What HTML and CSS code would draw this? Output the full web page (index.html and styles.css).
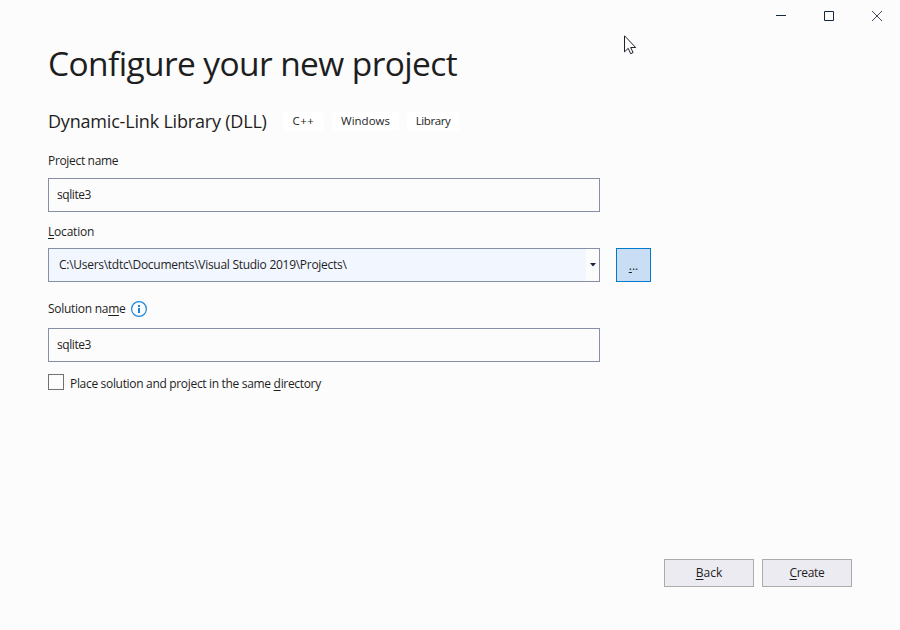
FILE: index.html
```html
<!DOCTYPE html>
<html lang="en">
<head>
<meta charset="utf-8">
<title>Configure your new project</title>
<link rel="stylesheet" href="styles.css">
</head>
<body>
<div class="window">
  <header class="titlebar">
    <svg class="caption" viewBox="0 0 48 32"><path d="M19 15.5h10"/></svg>
    <svg class="caption" viewBox="0 0 48 32"><path d="M19.5 11.5h9v9h-9z"/></svg>
    <svg class="caption close" viewBox="0 0 48 32"><path d="M19 11l10 10M29 11l-10 10"/></svg>
  </header>
  <main class="content">
    <h1 class="title"><span>Configure your new project</span></h1>
    <div class="template">
      <h2 class="template-name"><span>Dynamic-Link Library (DLL)</span></h2>
      <ul class="tags"><li class="tag tag-cpp">C++</li><li class="tag tag-win">Windows</li><li class="tag tag-lib">Library</li></ul>
    </div>
    <div class="field project">
      <div class="label"><span class="t-project">Project name</span></div>
      <div class="input"><span class="t-sql">sqlite3</span></div>
    </div>
    <div class="field location">
      <div class="label"><span class="t-location"><u>L</u>ocation</span></div>
      <div class="row">
        <div class="combo">
          <div class="combo-text"><span class="t-path">C:\Users\tdtc\Documents\Visual Studio 2019\Projects\</span></div>
          <div class="combo-arrow"><svg width="6" height="4" viewBox="0 0 6 4"><path d="M0 0h6L3 3.4z"/></svg></div>
        </div>
        <button class="browse"><u>.</u>..</button>
      </div>
    </div>
    <div class="field solution">
      <div class="label"><span class="t-solution">Solution na<u>m</u>e</span>
        <svg class="info" width="16" height="16" viewBox="0 0 16 16"><circle cx="8" cy="8" r="7.4"/><path d="M7 4h2v2H7zM7 7h2v5H7z"/></svg>
      </div>
      <div class="input"><span class="t-sql">sqlite3</span></div>
    </div>
    <div class="check"><span class="box"></span><span class="t-check">Place solution and project in the same <u>d</u>irectory</span></div>
  </main>
  <footer class="actions">
    <button class="btn"><span class="t-back"><u>B</u>ack</span></button>
    <button class="btn"><span class="t-create"><u>C</u>reate</span></button>
  </footer>
  <svg class="cursor" width="13" height="20" viewBox="0 0 13 20"><path d="M.5.8v16.1l3.7-3.6 2.5 5.4 2.4-1.1-2.4-5.1h5z"/></svg>
</div>
</body>
</html>
```
FILE: styles.css
```css
* { box-sizing: border-box; }
body { margin: 0; background: #fcfcfc; }
.window {
  position: relative;
  display: flex;
  flex-direction: column;
  width: 900px;
  height: 630px;
  overflow: hidden;
  background: #fcfcfc;
  color: #1e1e1e;
  font: 12px/16px "Open Sans", "Noto Sans", sans-serif;
  white-space: nowrap;
}
u { text-decoration-thickness: 1px; text-underline-offset: 2px; text-decoration-skip-ink: none; }
.titlebar { display: flex; justify-content: flex-end; height: 32px; margin-right: -1px; }
.caption { width: 48px; height: 32px; fill: none; stroke: #172540; stroke-width: 1; }
.close { stroke: #3d4758; }
.content { flex: 1; padding: 0 48px; }
.title { margin: 7px 0 0; height: 49px; font-size: 33.5px; line-height: 48px; font-weight: 400; letter-spacing: -.61px; }
.template { display: flex; align-items: center; height: 28px; margin-top: 19px; }
.template-name { margin: 0; width: 235px; font-size: 18px; line-height: 28px; font-weight: 400; letter-spacing: -.19px; }
.tags { display: flex; gap: 8px; margin: 0; padding: 0; list-style: none; }
.tag { height: 19px; line-height: 17px; border-radius: 3px; background: #fff; text-align: center; font-size: 11.5px; }
.tag-cpp { width: 41px; letter-spacing: .5px; }
.tag-win { width: 67px; }
.tag-lib { width: 52px; letter-spacing: -.4px; }
.label { display: flex; align-items: center; height: 16px; }
.t-project { letter-spacing: -.33px; }
.t-location { letter-spacing: -.2px; }
.t-solution { letter-spacing: -.28px; }
.t-sql { letter-spacing: -.43px; }
.t-path { letter-spacing: -.28px; }
.t-check { letter-spacing: -.32px; padding-top: 2px; }
.t-create { letter-spacing: -.35px; }
.project { margin-top: 18px; }
.input { display: flex; align-items: center; width: 552px; height: 34px; margin-top: 9px; padding-left: 8px; border: 1px solid #858fa5; }
.location { margin-top: 12px; }
.row { display: flex; gap: 16px; margin-top: 8px; }
.combo { display: flex; width: 552px; height: 34px; border: 1px solid #858fa5; }
.combo-text { display: flex; align-items: center; flex: 1; padding-left: 10px; background: #f2f6ff; }
.combo-arrow { display: flex; align-items: center; justify-content: center; width: 13px; fill: #172540; }
.browse { width: 35px; height: 34px; padding: 2px 0 0; border: 1px solid #007acc; background: #c9def5; color: #1e1e1e; font: inherit; }
.solution { margin-top: 19px; }
.solution .input { margin-top: 11px; }
.info { margin-left: 6px; fill: none; stroke: #1c86d8; stroke-width: 1.2; }
.info path { fill: #1c86d8; stroke: none; }
.check { display: flex; align-items: center; height: 18px; margin-top: 12px; }
.box { width: 16px; height: 16px; margin: -2px 6px 0 0; border: 1px solid #717171; }
.actions { display: flex; justify-content: flex-end; gap: 8px; height: 71px; padding-right: 48px; }
.btn { width: 90px; height: 28px; padding: 0; border: 1px solid #acacac; background: #ecebf1; color: #1e1e1e; font: inherit; }
.cursor { position: absolute; left: 624px; top: 35px; fill: #fff; stroke: #20202c; stroke-width: 1; }
```
